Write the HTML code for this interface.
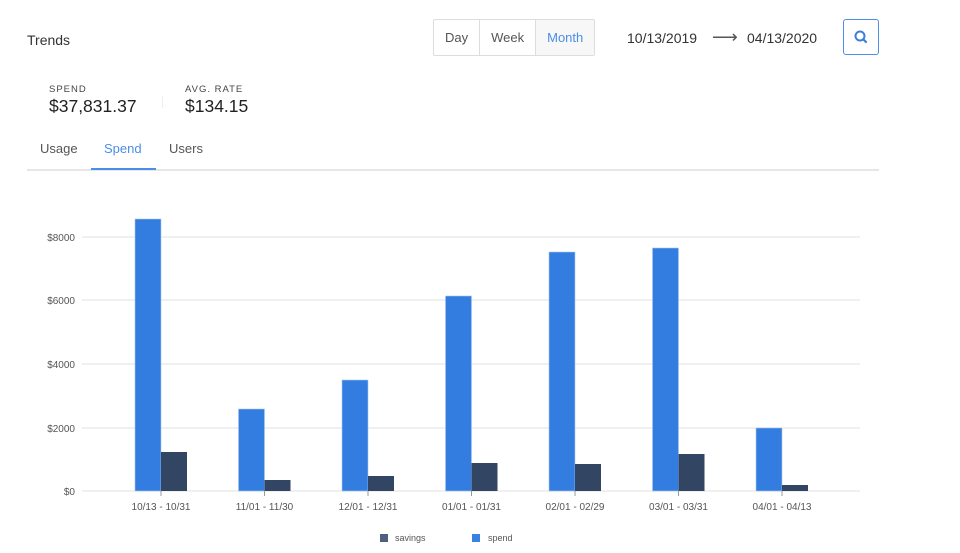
<!DOCTYPE html>
<html><head><style>
body{margin:0;width:960px;height:553px;background:#fff;font-family:"Liberation Sans",sans-serif;color:#333;position:relative;overflow:hidden}
.a{position:absolute;white-space:nowrap}
.seg{position:absolute;left:433px;top:19px;height:35px;border:1px solid #ddd;border-radius:2px;display:flex;font-size:13px}
.seg div{padding:0 11px;line-height:35px;color:#555;border-right:1px solid #ddd}
.seg div:last-child{border-right:0;background:#f7f7f7;color:#4a8ee8}
</style></head><body>
<div class="a" style="left:27px;top:32px;font-size:14px;color:#333">Trends</div>
<div class="seg"><div>Day</div><div>Week</div><div>Month</div></div>
<div class="a" style="left:627px;top:30px;font-size:14px;color:#333">10/13/2019</div>
<div class="a" style="left:712px;top:27px;font-size:18px;color:#555">⟶</div>
<div class="a" style="left:747px;top:30px;font-size:14px;color:#333">04/13/2020</div>
<div class="a" style="left:843px;top:19px;width:34px;height:34px;border:1px solid #4a8ee8;border-radius:3px">
<svg width="34" height="34" viewBox="0 0 34 34"><circle cx="16" cy="16" r="4.5" fill="none" stroke="#3a7fe0" stroke-width="2"/><line x1="19.3" y1="19.3" x2="22" y2="22" stroke="#3a7fe0" stroke-width="2.2" stroke-linecap="round"/></svg></div>
<div class="a" style="left:49px;top:84px;font-size:9.5px;letter-spacing:1px;color:#444">SPEND</div>
<div class="a" style="left:49px;top:96px;font-size:17.5px;color:#222">$37,831.37</div>
<div class="a" style="left:162px;top:96px;width:1px;height:12px;background:#eee"></div>
<div class="a" style="left:185px;top:84px;font-size:9.5px;letter-spacing:1px;color:#444">AVG. RATE</div>
<div class="a" style="left:185px;top:96px;font-size:17.5px;color:#222">$134.15</div>
<div class="a" style="left:40px;top:141px;font-size:13px;color:#555">Usage</div>
<div class="a" style="left:104px;top:141px;font-size:13px;color:#4a8ee8">Spend</div>
<div class="a" style="left:169px;top:141px;font-size:13px;color:#555">Users</div>
<div class="a" style="left:27px;top:169px;width:852px;height:2px;background:#e6e6e6"></div>
<div class="a" style="left:91px;top:168px;width:65px;height:2px;background:#4a8ee8"></div>
<svg class="a" style="left:0;top:0" width="960" height="553" font-family="Liberation Sans" font-size="10" fill="#555">
<g stroke="#ececec" stroke-width="1.5">
<line x1="82" x2="860" y1="237" y2="237"/><line x1="82" x2="860" y1="300" y2="300"/><line x1="82" x2="860" y1="364" y2="364"/><line x1="82" x2="860" y1="428" y2="428"/><line x1="82" x2="860" y1="491" y2="491"/></g>
<g text-anchor="end"><text x="75" y="241">$8000</text><text x="75" y="304">$6000</text><text x="75" y="368">$4000</text><text x="75" y="432">$2000</text><text x="75" y="495">$0</text></g>
<g fill="#327ddf" stroke="#a9c7f0" stroke-width="0.6">
<rect x="135" y="219" width="26" height="272"/><rect x="238.5" y="409" width="26" height="82"/><rect x="342" y="380" width="26" height="111"/><rect x="445.5" y="296" width="26" height="195"/><rect x="549" y="252" width="26" height="239"/><rect x="652.5" y="248" width="26" height="243"/><rect x="756" y="428" width="26" height="63"/></g>
<g fill="#324563">
<rect x="161" y="452" width="26" height="39"/><rect x="264.5" y="480" width="26" height="11"/><rect x="368" y="476" width="26" height="15"/><rect x="471.5" y="463" width="26" height="28"/><rect x="575" y="464" width="26" height="27"/><rect x="678.5" y="454" width="26" height="37"/><rect x="782" y="485" width="26" height="6"/></g>
<g stroke="#999" stroke-width="1">
<line x1="161" x2="161" y1="491" y2="496"/><line x1="264.5" x2="264.5" y1="491" y2="496"/><line x1="368" x2="368" y1="491" y2="496"/><line x1="471.5" x2="471.5" y1="491" y2="496"/><line x1="575" x2="575" y1="491" y2="496"/><line x1="678.5" x2="678.5" y1="491" y2="496"/><line x1="782" x2="782" y1="491" y2="496"/></g>
<g text-anchor="middle">
<text x="161" y="510">10/13 - 10/31</text><text x="264.5" y="510">11/01 - 11/30</text><text x="368" y="510">12/01 - 12/31</text><text x="471.5" y="510">01/01 - 01/31</text><text x="575" y="510">02/01 - 02/29</text><text x="678.5" y="510">03/01 - 03/31</text><text x="782" y="510">04/01 - 04/13</text></g>
<rect x="380" y="534" width="8" height="8" fill="#4e6080"/><text x="395" y="541" font-size="9">savings</text>
<rect x="472" y="534" width="8" height="8" fill="#3a82e0"/><text x="488" y="541" font-size="9">spend</text>
</svg>
</body></html>
